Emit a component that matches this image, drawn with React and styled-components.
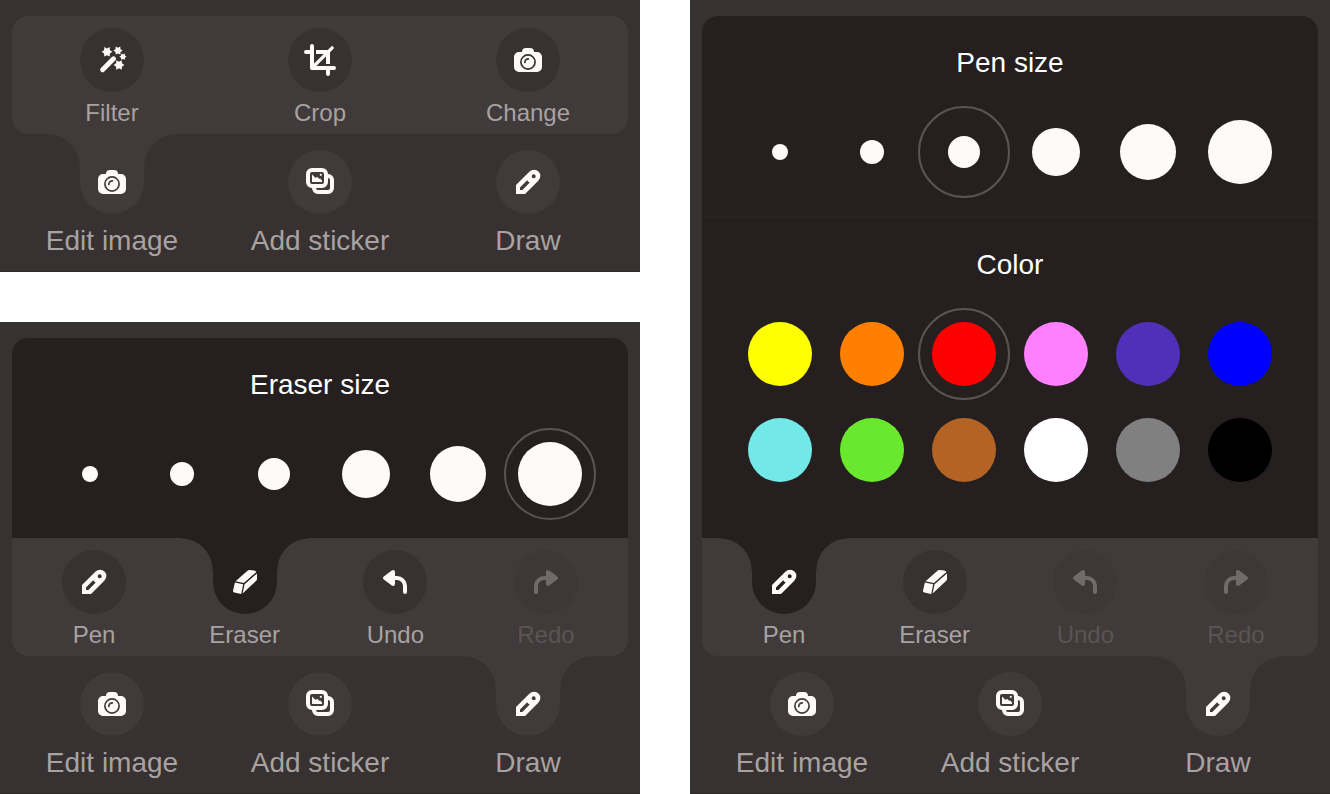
import React, { useState } from "react";
import styled, { createGlobalStyle, ThemeProvider, css } from "styled-components";

const theme = {
  base: "#373131",
  tray: "#403a3a",
  sheet: "#251f1f",
  ring: "#595353",
  label: "#a8a2a2",
  ink: "#fffafa",
};

const GlobalStyle = createGlobalStyle`
  *, *::before, *::after { box-sizing: border-box; }
  body {
    margin: 0;
    background: #fff;
    font-family: "Liberation Sans", Arial, Helvetica, sans-serif;
  }
`;

const Board = styled.main`
  display: grid;
  grid-template-columns: 1fr 1fr;
  gap: 50px;
  align-items: start;
`;

const Column = styled.div`
  display: flex;
  flex-direction: column;
  gap: 50px;
`;

const Editor = styled.section`
  padding-top: 16px;
  background: ${(p) => p.theme.base};
  border-bottom: 1px solid #2f2929;
`;

const Tray = styled.div`
  margin: 0 12px;
  border-radius: 16px;
  background: ${(p) => p.theme.tray};
`;

const Sheet = styled.div`
  border-radius: 16px 16px 0 0;
  background: ${(p) => p.theme.sheet};
`;

const SheetSection = styled.section`
  padding: 31px 46px ${(p) => (p.$roomy ? 56 : 32)}px;

  & + & {
    border-top: 2px solid #282222;
  }
`;

const SheetTitle = styled.h2`
  margin: 0 0 41px;
  font-size: 28px;
  line-height: 32px;
  font-weight: 400;
  text-align: center;
  color: #fff;
`;

const OptionGrid = styled.div`
  display: grid;
  grid-template-columns: repeat(6, 64px);
  justify-content: space-between;
  row-gap: 32px;
`;

const Option = styled.label`
  position: relative;
  display: flex;
  align-items: center;
  justify-content: center;
  height: 64px;
  cursor: pointer;

  &:has(input:checked)::after {
    content: "";
    position: absolute;
    inset: -14px;
    border: 2px solid ${(p) => p.theme.ring};
    border-radius: 50%;
  }
`;

const Dot = styled.input`
  appearance: none;
  margin: 0;
  width: ${(p) => p.$size}px;
  height: ${(p) => p.$size}px;
  border-radius: 50%;
  background: ${(p) => p.$color || p.theme.ink};
  cursor: pointer;
`;

const ToolRow = styled.div`
  display: flex;
  justify-content: space-between;
  padding: 12px ${(p) => p.$inset}px 7px;
`;

const MainRow = styled.nav`
  display: flex;
  justify-content: space-between;
  padding: 16px 80px 14px;
`;

const Tool = styled.button`
  display: flex;
  flex-direction: column;
  align-items: center;
  width: 64px;
  padding: 0;
  border: 0;
  background: none;
  font-family: inherit;
  color: ${(p) => p.theme.label};
  cursor: pointer;

  &:disabled {
    opacity: 0.25;
    cursor: default;
  }
`;

/* Neck that joins an open tool to the surface above it, with a rounded fillet on each side. */
const neck = css`
  isolation: isolate;

  &::before {
    content: "";
    position: absolute;
    z-index: -1;
    top: -${(p) => p.$rise}px;
    left: -32px;
    right: -32px;
    height: ${(p) => p.$rise + 32}px;
    background:
      radial-gradient(circle at 0 100%, transparent 31px, ${(p) => p.$fill} 32px) 0 0 / 32px 32px no-repeat,
      radial-gradient(circle at 100% 100%, transparent 31px, ${(p) => p.$fill} 32px) 100% 0 / 32px 32px no-repeat,
      linear-gradient(${(p) => p.$fill}, ${(p) => p.$fill}) 50% 0 / 64px 100% no-repeat;
  }
`;

const Disc = styled.span`
  position: relative;
  display: flex;
  align-items: center;
  justify-content: center;
  width: 64px;
  height: 64px;
  border-radius: 50%;
  color: ${(p) => p.theme.ink};
  background: ${(p) => p.$fill};
  ${(p) => p.$open && neck}
`;

const ToolLabel = styled.span`
  margin-top: ${(p) => (p.$large ? 11 : 7)}px;
  font-size: ${(p) => (p.$large ? 28 : 24)}px;
  line-height: ${(p) => (p.$large ? 32 : 28)}px;
  white-space: nowrap;
`;

const Glyph = styled.svg.attrs({ viewBox: "0 0 32 32", "aria-hidden": true })`
  display: block;
  width: 32px;
  height: 32px;
  fill: currentColor;
`;

const line = { fill: "none", stroke: "currentColor", strokeWidth: 4, strokeLinecap: "round", strokeLinejoin: "round" };

function starPoints(cx, cy, r, turn) {
  const pts = [];
  for (let i = 0; i < 12; i += 1) {
    const a = ((i * 30 + turn) * Math.PI) / 180;
    const d = i % 2 ? r * 0.62 : r;
    pts.push(`${(cx + d * Math.cos(a)).toFixed(2)},${(cy + d * Math.sin(a)).toFixed(2)}`);
  }
  return pts.join(" ");
}

const icons = {
  wand: () => (
    <Glyph>
      <path d="M6.6 25.8 17.6 14.8" {...line} strokeWidth={4.8} />
      <polygon points={starPoints(11, 7.8, 5.4, 0)} />
      <polygon points={starPoints(22, 6.6, 4.6, 0)} />
      <polygon points={starPoints(27, 12.7, 3.6, 0)} />
      <polygon points={starPoints(23, 21, 5.4, 0)} />
    </Glyph>
  ),
  crop: () => (
    <Glyph>
      <path d="M8 2v22h22M2 8h6M24 27v3" {...line} />
      <path d="M12 8h12v12" {...line} strokeLinecap="butt" />
      <path d="M24 24v4" {...line} />
      <path d="M8 24 28.2 3.8" {...line} strokeWidth={3.2} />
    </Glyph>
  ),
  camera: ({ cut }) => (
    <Glyph>
      <path d="M10 8a4 4 0 0 1 4-4h4a4 4 0 0 1 4 4h3a5 5 0 0 1 5 5v10a5 5 0 0 1-5 5H7a5 5 0 0 1-5-5V13a5 5 0 0 1 5-5z" />
      <circle cx="16" cy="18" r="7.1" fill="none" stroke={cut} strokeWidth="1.7" />
      <path d="M12.8 18.4a3.6 3.6 0 0 1 3.6-3.6" fill="none" stroke={cut} strokeWidth="1.7" strokeLinecap="round" />
    </Glyph>
  ),
  sticker: () => (
    <Glyph>
      <rect x="4" y="4" width="18" height="16" rx="4" {...line} />
      <path d="M24 10a4 4 0 0 1 4 4v8a4 4 0 0 1-4 4H14a4 4 0 0 1-4-4" {...line} strokeLinecap="butt" />
      <path d="M8 8.4 11.4 11.8 13.6 11 15 12.8 16.2 12.6 18 14.4V16H8z" />
      <circle cx="16.8" cy="8.8" r="1.1" />
    </Glyph>
  ),
  pen: () => (
    <Glyph>
      <path
        fillRule="evenodd"
        d="M4 28V19L17.6 5.5a6.2 6.2 0 0 1 8.9 8.9L13 28zM19.7 10.3a2 2 0 1 0 4 0a2 2 0 1 0-4 0zM8 24v-2.6l7.2-7.2.9 1.4 1.6 1L10.4 24z"
      />
    </Glyph>
  ),
  eraser: () => (
    <Glyph>
      <path d="M6.6 15.2 18.2 4.9Q19.2 4 20.6 4.1L25 4.6Q26.6 4.8 27.4 6L14.8 16.9z" />
      <path d="M28 7.4V13Q28 14 27 14.9L13.6 27.4 15.6 18.2z" />
      <path d="M5.9 16.4 14.2 18.2 12.2 28 5.4 26.6Q4 26.2 4 24.8z" />
    </Glyph>
  ),
  undo: () => (
    <Glyph>
      <path d="M6 12 14 6v12z" {...line} fill="currentColor" />
      <path d="M14 12h4a8 8 0 0 1 8 8v6" {...line} />
    </Glyph>
  ),
  redo: () => (
    <Glyph>
      <path d="M26 12 18 6v12z" {...line} fill="currentColor" />
      <path d="M18 12h-4a8 8 0 0 0-8 8v6" {...line} />
    </Glyph>
  ),
};

function ToolButton({ icon, label, large, open, disabled, fill, rise, onClick }) {
  const Icon = icons[icon];
  return (
    <Tool type="button" disabled={disabled} aria-pressed={open} onClick={onClick}>
      <Disc $fill={fill} $open={open} $rise={rise}>
        <Icon cut={fill} />
      </Disc>
      <ToolLabel $large={large}>{label}</ToolLabel>
    </Tool>
  );
}

const mainTools = [
  { icon: "camera", label: "Edit image" },
  { icon: "sticker", label: "Add sticker" },
  { icon: "pen", label: "Draw" },
];

function MainTools({ active }) {
  return (
    <MainRow>
      {mainTools.map((t) => (
        <ToolButton key={t.label} {...t} large open={t.label === active} fill={theme.tray} rise={16} />
      ))}
    </MainRow>
  );
}

function SubTools({ tools, active, inset }) {
  return (
    <ToolRow $inset={inset}>
      {tools.map((t) => {
        const open = t.label === active;
        return <ToolButton key={t.label} {...t} open={open} fill={open ? theme.sheet : theme.base} rise={12} />;
      })}
    </ToolRow>
  );
}

const sizes = [16, 24, 32, 48, 56, 64];

const colors = [
  ["Yellow", "#ffff00"],
  ["Orange", "#ff8000"],
  ["Red", "#ff0000"],
  ["Pink", "#ff80ff"],
  ["Purple", "#5030b8"],
  ["Blue", "#0000ff"],
  ["Cyan", "#73e8e8"],
  ["Green", "#6ae82e"],
  ["Brown", "#b36424"],
  ["White", "#ffffff"],
  ["Gray", "#808080"],
  ["Black", "#000000"],
];

function SizePicker({ title, name, initial }) {
  const [size, setSize] = useState(initial);
  return (
    <SheetSection>
      <SheetTitle>{title}</SheetTitle>
      <OptionGrid role="radiogroup" aria-label={title}>
        {sizes.map((s) => (
          <Option key={s}>
            <Dot type="radio" name={name} aria-label={`${s} px`} $size={s} checked={s === size} onChange={() => setSize(s)} />
          </Option>
        ))}
      </OptionGrid>
    </SheetSection>
  );
}

function ColorPicker() {
  const [color, setColor] = useState("Red");
  return (
    <SheetSection $roomy>
      <SheetTitle>Color</SheetTitle>
      <OptionGrid role="radiogroup" aria-label="Color">
        {colors.map(([label, value]) => (
          <Option key={label}>
            <Dot
              type="radio"
              name="pen-color"
              aria-label={label}
              $size={64}
              $color={value}
              checked={label === color}
              onChange={() => setColor(label)}
            />
          </Option>
        ))}
      </OptionGrid>
    </SheetSection>
  );
}

const imageTools = [
  { icon: "wand", label: "Filter" },
  { icon: "crop", label: "Crop" },
  { icon: "camera", label: "Change" },
];

const drawTools = (canUndo) => [
  { icon: "pen", label: "Pen" },
  { icon: "eraser", label: "Eraser" },
  { icon: "undo", label: "Undo", disabled: !canUndo },
  { icon: "redo", label: "Redo", disabled: true },
];

export default function App() {
  return (
    <ThemeProvider theme={theme}>
      <GlobalStyle />
      <Board>
        <Column>
          <Editor aria-label="Edit image tools">
            <Tray>
              <SubTools tools={imageTools} inset={68} />
            </Tray>
            <MainTools active="Edit image" />
          </Editor>
          <Editor aria-label="Eraser tools">
            <Tray>
              <Sheet>
                <SizePicker title="Eraser size" name="eraser-size" initial={64} />
              </Sheet>
              <SubTools tools={drawTools(true)} active="Eraser" inset={50} />
            </Tray>
            <MainTools active="Draw" />
          </Editor>
        </Column>
        <Editor aria-label="Pen tools">
          <Tray>
            <Sheet>
              <SizePicker title="Pen size" name="pen-size" initial={32} />
              <ColorPicker />
            </Sheet>
            <SubTools tools={drawTools(false)} active="Pen" inset={50} />
          </Tray>
          <MainTools active="Draw" />
        </Editor>
      </Board>
    </ThemeProvider>
  );
}
